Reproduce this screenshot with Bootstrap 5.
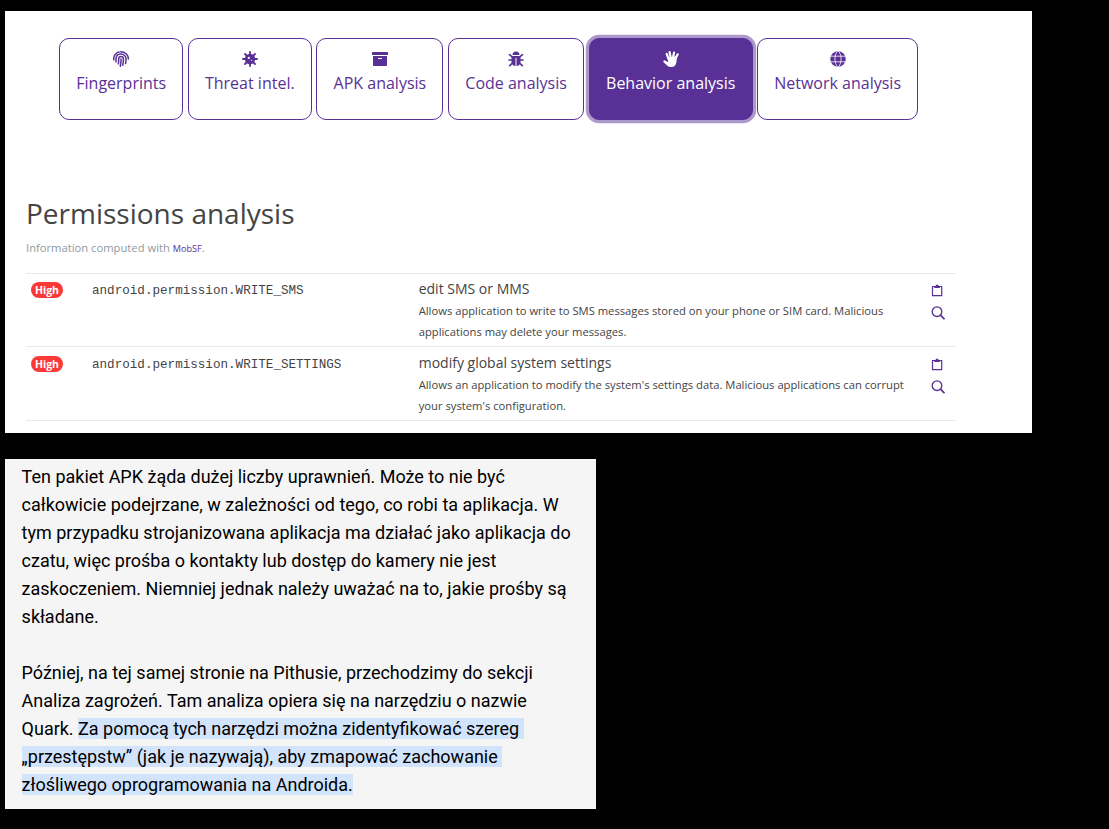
<!DOCTYPE html>
<html lang="pl">
<head>
<meta charset="utf-8">
<title>Pithus</title>
<link href="https://cdn.jsdelivr.net/npm/bootstrap@5.3.0/dist/css/bootstrap.min.css" rel="stylesheet">
<style>
body{background:#000;font-family:"Open Sans",sans-serif;color:#444;padding:11px 0 0 5px;overflow:hidden}
.report{background:#fff;width:1027px;height:422px;padding:27px 76px 0 21px}
.tabs{padding-left:33.2px;gap:4.6px}
.tabs .btn{--bs-btn-color:#593196;--bs-btn-border-color:#593196;--bs-btn-hover-bg:#593196;--bs-btn-hover-color:#fff;--bs-btn-active-bg:#593196;--bs-btn-active-border-color:#593196;--bs-btn-active-color:#fff;height:82px;padding:12px 0 24px;border-radius:10px;font-size:16px;line-height:24px;white-space:nowrap;flex:none}
.tabs .btn.active{box-shadow:0 0 0 3.2px #ac98ca}
.tabs svg{display:block;width:16px;height:16px;margin:0 auto 4px}
.w-a{width:124px}.w-b{width:127px}.w-c{width:136.3px}.w-d{width:163.7px}.w-e{width:161px}
h1{font-size:28px;line-height:34px;margin:76px 0 0;font-weight:400}
.source{font-size:11.22px;line-height:21px;color:#919aa1;margin:7px 0 14px}
.source a{font-size:9.1px;color:#593196;text-decoration:none}
.perm{border-top:1px solid #e9e9e9;height:73px;padding:5px 5px 0}
.perm + .perm{height:74px;padding-top:6px}
.perms{border-bottom:1px solid #e9e9e9;height:148px}
.risk{width:61px;flex:none;padding-top:3px}
.perm + .perm .risk{padding-top:2.5px}
.risk .badge{display:block;width:32px;height:16px;background:#fc3939;font-size:10.5px;line-height:16px;padding:0;font-weight:700}
.perm code{width:326.7px;flex:none;color:#444;font:12.6px/22px "Liberation Mono",monospace;padding-top:1px}
.desc{width:500.3px;flex:none;font-size:14px;line-height:21px;margin-top:-1px}
.desc p{font-size:11.22px;line-height:21px;margin:1px 0 0;white-space:nowrap}
.tools{margin-left:12px;padding-top:5px;color:#593196}
.tools svg{display:block;width:14px;height:14px;margin-bottom:8px}
.note{background:#f5f5f5;width:591px;height:350px;margin-top:26px;padding:4px 16.6px;color:#000;font:17.99px/28px Roboto,sans-serif}
.note p{margin:0 0 28px;white-space:pre}
.note span{background:#d2e3fc}
</style>
</head>
<body>
<main class="report">
<nav class="tabs d-flex">
<button class="btn btn-outline-primary w-a"><svg viewBox="0 0 16 16" fill="none" stroke="currentColor" stroke-width="1.5" stroke-linecap="round"><path d="M.8 8.8C.2 4.4 3.2.8 7.4.8c4.5-.2 8.2 3.1 7.9 7.2M3 10.8c.2-1-.1-2.3 0-3.3.2-2.6 2.2-4.3 4.8-4.4 3-.1 5.2 2.3 5.2 4.8 0 1.8-.1 3-.4 4.5M5.3 12.8c.5-1.700.3-3.100.4-4.900.1-1.500 1-2.300 2.200-2.300 1.500 0 2.500 1 2.500 2.400 0 2.200-.1 4.100-.6 6.200M8 8.100c.1 2.500-.1 4.700-.7 7.100"/></svg>Fingerprints</button>
<button class="btn btn-outline-primary w-a"><svg viewBox="0 0 16 16"><path stroke="currentColor" stroke-width="1.8" stroke-linecap="round" d="M8 1v14M1 8h14M3 3l10 10M13 3L3 13"/><circle cx="8" cy="8" r="5.2" fill="currentColor"/><circle cx="6.8" cy="6.9" r="1.1" fill="#fff"/><circle cx="9.6" cy="9.3" r=".6" fill="#fff"/></svg>Threat intel.</button>
<button class="btn btn-outline-primary w-b"><svg viewBox="0 0 512 512" fill="currentColor"><path d="M32 448c0 17.700 14.300 32 32 32h384c17.700 0 32-14.300 32-32V160H32v288zm160-212c0-6.600 5.400-12 12-12h104c6.600 0 12 5.400 12 12v8c0 6.600-5.400 12-12 12H204c-6.600 0-12-5.400-12-12v-8zM480 32H32C14.300 32 0 46.300 0 64v48c0 8.800 7.200 16 16 16h480c8.800 0 16-7.200 16-16V64c0-17.700-14.300-32-32-32z"/></svg>APK analysis</button>
<button class="btn btn-outline-primary w-c"><svg viewBox="0 0 16 16"><path fill="currentColor" d="M4.500 4a3.500 3.500 0 0 1 7 0zM3.500 5h9v6c0 2.400-1.500 3.900-4 4V7h-1v8c-2.500-.1-4-1.600-4-4z"/><path fill="none" stroke="currentColor" stroke-width="1.7" stroke-linecap="round" d="M1.500 3.700l3 2.500M14.500 3.700l-3 2.500M1 9h4M11 9h4M1.700 14.600l3-2.800M14.300 14.600l-3-2.800"/></svg>Code analysis</button>
<button class="btn btn-outline-primary active w-d"><svg viewBox="0 0 16 16"><g stroke="currentColor" stroke-linecap="round" stroke-linejoin="round" fill="none" stroke-width="2.2"><path d="M6 9L3.700 3M8 8L6.600 1.200M9.800 8l1.200-6.300M11.500 9.500l3.200-6.200M6 12.800L1.400 10.500"/></g><path fill="currentColor" d="M4.700 6.400l6-.6 3.300-.5-.6 6c-.6 3-2 4.700-4.800 4.700H7.500c-1.900 0-3.100-.9-5-2.900l-1.500-1.600 1.300-1 3 1z"/></svg>Behavior analysis</button>
<button class="btn btn-outline-primary w-e"><svg viewBox="0 0 16 16"><circle cx="8" cy="8" r="7.75" fill="currentColor"/><path d="M.5 5.200h15M.5 10.800h15M8-.6C3.900 3.800 3.900 12.200 8 16.600M8-.6c4.100 4.400 4.100 12.800 0 17.200" fill="none" stroke="#fff" stroke-width=".8"/></svg>Network analysis</button>
</nav>
<h1>Permissions analysis</h1>
<p class="source">Information computed with <a href="#">MobSF</a>.</p>
<section class="perms">
<div class="perm d-flex"><div class="risk"><span class="badge rounded-pill">High</span></div><code>android.permission.WRITE_SMS</code><div class="desc">edit SMS or MMS<p>Allows application to write to SMS messages stored on your phone or SIM card. Malicious<br>applications may delete your messages.</p></div>
<div class="tools"><svg viewBox="0 0 14 14" fill="none" stroke="currentColor"><path stroke-width="1.2" d="M1.500 2.500h9.200v9.200H1.500z"/><path fill="currentColor" stroke="none" d="M3.300 2.200h1.200C4.600 1.300 5.200.8 6.100.8s1.500.5 1.600 1.400h1.200v1.700H3.300z"/></svg><svg viewBox="0 0 14 14" fill="none" stroke="currentColor"><circle cx="6" cy="5.700" r="4.800" stroke-width="1.350"/><path stroke-width="1.700" d="M9.500 9.200l4 4"/></svg></div></div>
<div class="perm d-flex"><div class="risk"><span class="badge rounded-pill">High</span></div><code>android.permission.WRITE_SETTINGS</code><div class="desc">modify global system settings<p>Allows an application to modify the system's settings data. Malicious applications can corrupt<br>your system's configuration.</p></div>
<div class="tools"><svg viewBox="0 0 14 14" fill="none" stroke="currentColor"><path stroke-width="1.2" d="M1.500 2.500h9.200v9.200H1.500z"/><path fill="currentColor" stroke="none" d="M3.300 2.200h1.200C4.600 1.300 5.200.8 6.100.8s1.500.5 1.600 1.400h1.200v1.700H3.300z"/></svg><svg viewBox="0 0 14 14" fill="none" stroke="currentColor"><circle cx="6" cy="5.700" r="4.800" stroke-width="1.350"/><path stroke-width="1.700" d="M9.500 9.200l4 4"/></svg></div></div>
</section>
</main>
<article class="note"><p>Ten pakiet APK żąda dużej liczby uprawnień. Może to nie być
całkowicie podejrzane, w zależności od tego, co robi ta aplikacja. W
tym przypadku strojanizowana aplikacja ma działać jako aplikacja do
czatu, więc prośba o kontakty lub dostęp do kamery nie jest
zaskoczeniem. Niemniej jednak należy uważać na to, jakie prośby są
składane.</p><p>Później, na tej samej stronie na Pithusie, przechodzimy do sekcji
Analiza zagrożeń. Tam analiza opiera się na narzędziu o nazwie
Quark. <span>Za pomocą tych narzędzi można zidentyfikować szereg </span>
<span>„przestępstw” (jak je nazywają), aby zmapować zachowanie </span>
<span>złośliwego oprogramowania na Androida.</span></p></article>
<script src="https://cdn.jsdelivr.net/npm/bootstrap@5.3.0/dist/js/bootstrap.bundle.min.js"></script>
</body>
</html>
